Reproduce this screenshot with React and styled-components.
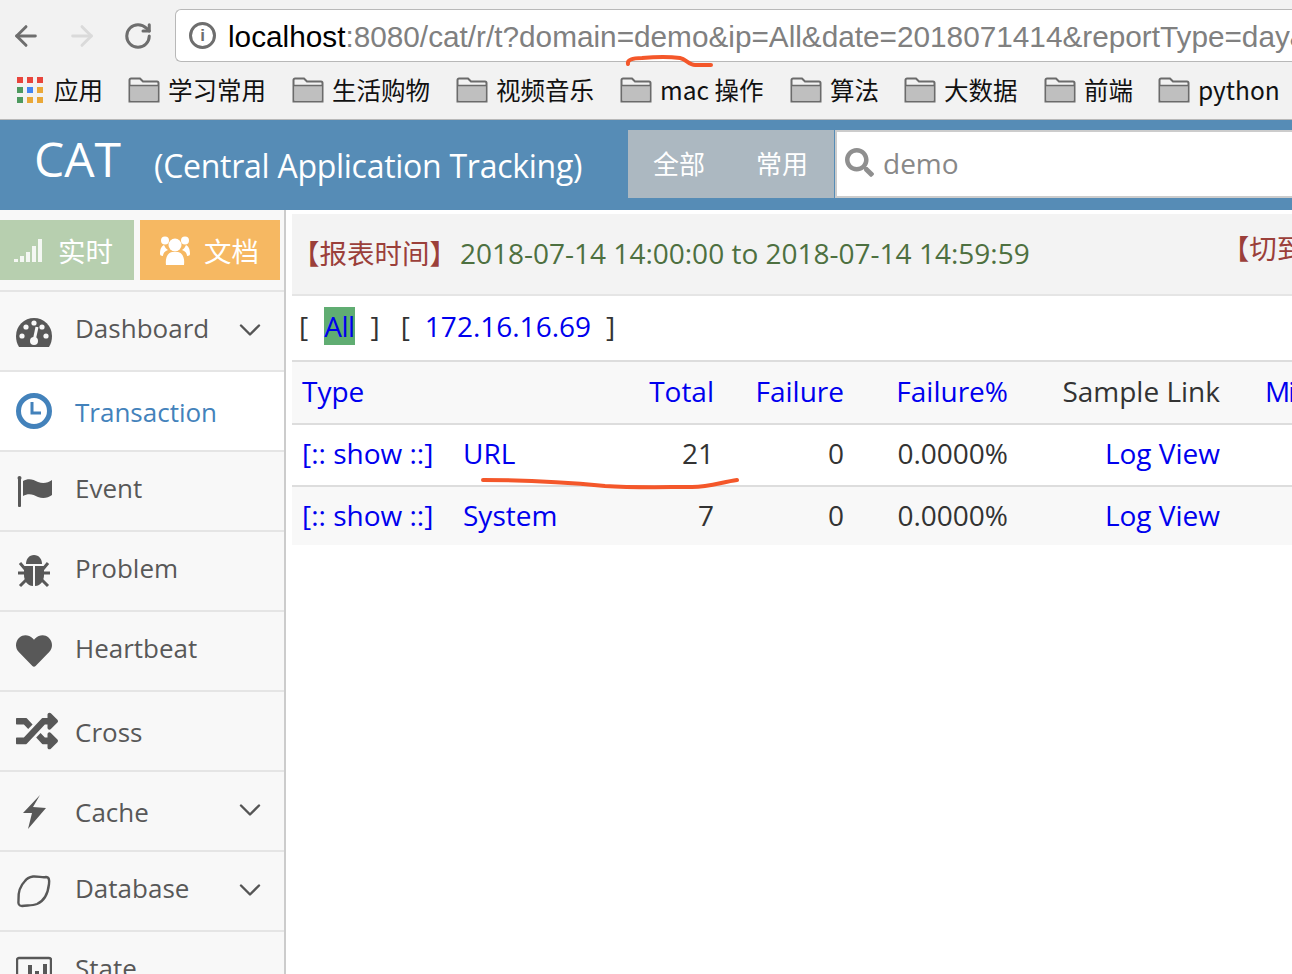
import styled, { createGlobalStyle } from 'styled-components';
import { ArrowLeft, ArrowRight, RotateCw, ChevronDown } from 'lucide-react';
import { FaHeart, FaRandom, FaSearch } from 'react-icons/fa';

function GaugeIcon() {
  return (
    <svg width="36" height="36" viewBox="0 0 36 36">
      <path fill="currentColor" d="M3 34C1 31 0 27 0 23a18 18 0 0 1 36 0c0 4-1 8-3 11z" />
      <g fill="#f8f8f8">
        <circle cx="6" cy="23" r="2.6" />
        <circle cx="10" cy="14" r="2.6" />
        <circle cx="18" cy="10" r="2.6" />
        <circle cx="26" cy="14" r="2.6" />
        <circle cx="30" cy="23" r="2.6" />
        <circle cx="18" cy="28" r="4" />
      </g>
      <path d="M18 28l3-14" stroke="#f8f8f8" strokeWidth="3" />
    </svg>
  );
}

function ClockIcon() {
  return (
    <svg width="36" height="36" viewBox="0 0 36 36" fill="none" stroke="currentColor">
      <circle cx="18" cy="18" r="15.5" strokeWidth="5" />
      <path d="M16 9v11h9" strokeWidth="3" />
    </svg>
  );
}

function FlagIcon() {
  return (
    <svg width="36" height="36" viewBox="0 0 36 36" fill="currentColor">
      <circle cx="3.5" cy="5" r="2" />
      <rect x="2" y="5" width="3" height="29" rx="1" />
      <path d="M7 8c5-3 10-2 15 1 5 2 10 1 14-2v15c-4 3-9 4-14 2-5-3-10-4-15-1z" />
    </svg>
  );
}

function BugIcon() {
  return (
    <svg width="36" height="36" viewBox="0 0 36 36" fill="currentColor">
      <path d="M10 11c0-5 3-9 8-9s8 4 8 9z" />
      <path d="M8 13h9v20c-6 0-9-6-9-11z" />
      <path d="M28 13h-9v20c6 0 9-6 9-11z" />
      <path d="M9 16l-5-6M27 16l5-6M2 20h7M27 20h7M10 27l-6 6M26 27l6 6" stroke="currentColor" strokeWidth="3" />
    </svg>
  );
}

function BoltIcon() {
  return (
    <svg width="36" height="36" viewBox="0 0 36 36" fill="currentColor">
      <path d="M24 2L7 20h9l-4 16 18-21-13-1z" />
    </svg>
  );
}

function LemonIcon() {
  return (
    <svg width="36" height="36" viewBox="0 0 36 36" fill="none" stroke="currentColor" strokeWidth="2.4">
      <path d="M17 3.500C22 3 27 5 30 4c3 0 3.500 3 3 7-1 9-5 17-12 20-5 2-11 1-15 2-3 0-4-2-3.500-6C2 19 5 12 9 8c2-3 5-4 8-4.500z" />
    </svg>
  );
}

function StateIcon() {
  return (
    <svg width="36" height="36" viewBox="0 0 36 36" fill="currentColor">
      <rect x="1" y="5" width="34" height="30" rx="2" fill="none" stroke="currentColor" strokeWidth="2.4" />
      <rect x="5" y="28" width="4" height="6" />
      <rect x="12" y="12" width="4" height="22" />
      <rect x="19" y="18" width="4" height="16" />
      <rect x="27" y="11" width="4" height="23" />
    </svg>
  );
}

function GroupIcon() {
  return (
    <svg width="30" height="30" viewBox="0 0 30 30" fill="#fff">
      <circle cx="15" cy="10" r="6.500" />
      <circle cx="5" cy="5.500" r="4" />
      <circle cx="25" cy="5.500" r="4" />
      <path d="M6 30c-1-8 2-12 6-13h6c4 1 7 5 6 13z" />
      <path d="M0 19c0-6 2-8 4-9 1 2 2 4 4 5-3 1-5 3-5 6-2 0-3-1-3-2z" />
      <path d="M30 19c0-6-2-8-4-9-1 2-2 4-4 5 3 1 5 3 5 6 2 0 3-1 3-2z" />
    </svg>
  );
}

function FolderIcon() {
  return (
    <svg width="32" height="26" viewBox="0 0 32 26">
      <path d="M1.500 24.500V3A1.500 1.500 0 0 1 3 1.500h9l3 3h14A1.500 1.500 0 0 1 30.500 6v18.500z" fill="#f2f2f2" stroke="#6b6b6b" strokeWidth="2" />
      <rect x="2.500" y="9" width="27" height="15" fill="#bfbfbf" />
      <path d="M2 8.500h28" stroke="#6b6b6b" strokeWidth="1.500" />
    </svg>
  );
}

function AppsIcon() {
  const colors = ['#e8453c', '#e8453c', '#e8453c', '#4e9a5f', '#4285f4', '#eaa838', '#4e9a5f', '#eaa838', '#eaa838'];
  return (
    <svg width="28" height="28" viewBox="0 0 28 28">
      {colors.map((color, i) => (
        <rect key={i} x={1 + (i % 3) * 10} y={1 + Math.floor(i / 3) * 10} width="6" height="6" fill={color} />
      ))}
    </svg>
  );
}

function SignalIcon() {
  return (
    <svg width="30" height="26" viewBox="0 0 30 26" fill="#fff" opacity="0.85">
      <rect x="0" y="22" width="4" height="3" />
      <rect x="6" y="19" width="4" height="6" />
      <rect x="12" y="15" width="4" height="10" />
      <rect x="18" y="9" width="4" height="16" />
      <rect x="24" y="2" width="4" height="23" />
    </svg>
  );
}

const bookmarks = [
  { name: '学习常用', width: 164 },
  { name: '生活购物', width: 164 },
  { name: '视频音乐', width: 164 },
  { name: 'mac 操作', width: 170 },
  { name: '算法', width: 114 },
  { name: '大数据', width: 140 },
  { name: '前端', width: 114 },
  { name: 'python', width: 130 },
];

const navItems = [
  { name: 'Dashboard', icon: GaugeIcon, more: true },
  { name: 'Transaction', icon: ClockIcon, active: true, low: true },
  { name: 'Event', icon: FlagIcon },
  { name: 'Problem', icon: BugIcon },
  { name: 'Heartbeat', icon: FaHeart },
  { name: 'Cross', icon: FaRandom, low: true, wide: true },
  { name: 'Cache', icon: BoltIcon, more: true, low: true },
  { name: 'Database', icon: LemonIcon, more: true },
  { name: 'State', icon: StateIcon },
];

const rows = [
  { type: 'URL', total: 21 },
  { type: 'System', total: 7 },
];

export default function App() {
  return (
    <Page>
      <GlobalStyle />

      <BrowserBar>
        <AddressRow>
          <NavArrow><ArrowLeft size={32} strokeWidth={2.2} /></NavArrow>
          <NavArrow $off><ArrowRight size={32} strokeWidth={2.2} /></NavArrow>
          <NavArrow><RotateCw size={30} strokeWidth={2.4} /></NavArrow>
          <Address>
            <InfoMark>i</InfoMark>
            <Host>localhost</Host>:8080/cat/r/t?domain=demo&amp;ip=All&amp;date=2018071414&amp;reportType=day&amp;op=view
          </Address>
        </AddressRow>
        <Bookmarks>
          <AppsBookmark><AppsIcon />应用</AppsBookmark>
          {bookmarks.map(item => (
            <Bookmark key={item.name} $width={item.width}><FolderIcon />{item.name}</Bookmark>
          ))}
        </Bookmarks>
      </BrowserBar>

      <Header>
        <Brand>CAT</Brand>
        <Subtitle>(Central Application Tracking)</Subtitle>
        <Tabs>
          <Tab>全部</Tab>
          <Tab>常用</Tab>
        </Tabs>
        <SearchBox>
          <FaSearch />
          <span>demo</span>
        </SearchBox>
      </Header>

      <Body>
        <Sidebar>
          <Shortcuts>
            <Shortcut $color="#b7cfaf" $width={134} $pad={14}><SignalIcon />实时</Shortcut>
            <Shortcut $color="#f6b862" $width={140} $pad={20}><GroupIcon />文档</Shortcut>
          </Shortcuts>
          {navItems.map(item => (
            <NavItem key={item.name} $active={item.active}>
              <NavIcon $wide={item.wide}><item.icon /></NavIcon>
              <NavLabel $low={item.low}>{item.name}</NavLabel>
              {item.more && <NavMore><ChevronDown size={36} strokeWidth={1.6} /></NavMore>}
            </NavItem>
          ))}
        </Sidebar>

        <Main>
          <ReportBar>
            <Red>【报表时间】</Red>
            <Green>2018-07-14 14:00:00 to 2018-07-14 14:59:59</Green>
            <SwitchLink>【切到历史模式】</SwitchLink>
          </ReportBar>

          <IpRow>
            <Bracket>[</Bracket>
            <IpLink $selected>All</IpLink>
            <Bracket>]</Bracket>
            <Bracket $open>[</Bracket>
            <IpLink>172.16.16.69</IpLink>
            <Bracket>]</Bracket>
          </IpRow>

          <TableHead>
            <HeadLink $span>Type</HeadLink>
            <HeadLink $right>Total</HeadLink>
            <HeadLink $right>Failure</HeadLink>
            <HeadLink $right>Failure%</HeadLink>
            <HeadText>Sample Link</HeadText>
            <HeadLink $min>Min</HeadLink>
          </TableHead>
          {rows.map((row, i) => (
            <TableRow key={row.type} $striped={i % 2 === 1}>
              <Cell><CellLink>[:: show ::]</CellLink></Cell>
              <Cell><CellLink>{row.type}</CellLink></Cell>
              <Cell $right>{row.total}</Cell>
              <Cell $right>0</Cell>
              <Cell $right>0.0000%</Cell>
              <Cell $right><CellLink>Log View</CellLink></Cell>
            </TableRow>
          ))}
        </Main>
      </Body>

      <Scribbles viewBox="0 0 1292 974" width="1292" height="974">
        <path d="M628 64c-1-4 4-6 14-6 12-1 30-1 38 0 6 1 9 7 15 7h16" />
        <path d="M483 480c40 0 80 2 122 6 30 2 60 1 87 1 18 0 30-5 45-7" />
      </Scribbles>
    </Page>
  );
}

const GlobalStyle = createGlobalStyle`
  html, body {
    margin: 0;
    padding: 0;
    background: #fff;
  }
`;

const Page = styled.div`
  position: relative;
  width: 1292px;
  height: 974px;
  overflow: hidden;
  font-family: "Open Sans", "Noto Sans CJK SC", sans-serif;
  color: #333;
`;

const BrowserBar = styled.div`
  height: 119px;
  background: #f2f2f2;
  border-bottom: 1px solid #b9b9b9;
  overflow: hidden;
`;

const AddressRow = styled.div`
  display: flex;
  align-items: center;
  gap: 24px;
  height: 53px;
  padding: 9px 0 0 10px;
`;

const NavArrow = styled.div`
  flex: none;
  display: flex;
  justify-content: center;
  width: 32px;
  color: ${props => (props.$off ? '#dadada' : '#6e6e6e')};
`;

const Address = styled.div`
  flex: none;
  display: flex;
  align-items: center;
  width: 1200px;
  height: 53px;
  box-sizing: border-box;
  margin-left: -3px;
  padding: 2px 0 0 13px;
  background: #fff;
  border: 1px solid #b8b8b8;
  border-right: 0;
  border-radius: 6px 0 0 6px;
  font-family: "Liberation Sans", sans-serif;
  font-size: 29.75px;
  color: #808080;
  white-space: nowrap;
`;

const InfoMark = styled.span`
  flex: none;
  display: flex;
  align-items: center;
  justify-content: center;
  width: 21px;
  height: 21px;
  margin: -2px 12px 0 0;
  border: 3px solid #6e6e6e;
  border-radius: 50%;
  font-size: 17px;
  font-weight: bold;
  color: #6e6e6e;
`;

const Host = styled.span`
  color: #000;
`;

const Bookmarks = styled.div`
  display: flex;
  align-items: center;
  height: 55px;
  padding-left: 16px;
  font-family: "Noto Sans CJK SC", sans-serif;
  font-size: 24.500px;
  color: #111;
  white-space: nowrap;
`;

const AppsBookmark = styled.div`
  flex: none;
  display: flex;
  align-items: center;
  gap: 10px;
  width: 112px;
`;

const Bookmark = styled.div`
  flex: none;
  display: flex;
  align-items: center;
  gap: 8px;
  width: ${props => props.$width}px;
`;

const Header = styled.div`
  display: flex;
  align-items: center;
  height: 90px;
  padding-left: 34px;
  background: #568cb6;
  color: #fff;
  white-space: nowrap;
`;

const Brand = styled.div`
  flex: none;
  width: 120px;
  font-size: 48px;
  line-height: 80px;
  padding-bottom: 12px;
`;

const Subtitle = styled.div`
  flex: none;
  width: 474px;
  font-size: 32px;
  letter-spacing: -0.27px;
`;

const Tabs = styled.div`
  flex: none;
  display: flex;
  align-items: center;
  gap: 51px;
  width: 206px;
  height: 68px;
  box-sizing: border-box;
  margin-bottom: 2px;
  padding: 0 0 4px 25px;
  background: #acb8c1;
`;

const Tab = styled.div`
  flex: none;
  width: 52px;
  font-family: "Noto Sans CJK SC", sans-serif;
  font-size: 26px;
`;

const SearchBox = styled.div`
  flex: none;
  display: flex;
  align-items: center;
  gap: 9px;
  width: 500px;
  height: 68px;
  box-sizing: border-box;
  margin: 0 0 2px 1px;
  padding: 0 0 2px 8px;
  background: #fff;
  border: 2px solid #ccc;
  border-right: 0;
  font-size: 28px;
  color: #888;

  svg {
    font-size: 29px;
    color: #8f8f8f;
    margin-bottom: 2px;
  }
`;

const Body = styled.div`
  display: flex;
  height: 764px;
`;

const Sidebar = styled.div`
  flex: none;
  width: 284px;
  background: #f8f8f8;
  border-right: 2px solid #ccc;
  overflow: hidden;
`;

const Shortcuts = styled.div`
  display: flex;
  gap: 6px;
  height: 82px;
  padding-top: 10px;
  box-sizing: border-box;
  border-bottom: 2px solid #e5e5e5;
`;

const Shortcut = styled.div`
  flex: none;
  display: flex;
  align-items: center;
  gap: 14px;
  width: ${props => props.$width}px;
  height: 60px;
  box-sizing: border-box;
  padding-left: ${props => props.$pad}px;
  background: ${props => props.$color};
  color: #fff;
  font-family: "Noto Sans CJK SC", sans-serif;
  font-size: 27.500px;
`;

const NavItem = styled.div`
  position: relative;
  display: flex;
  align-items: center;
  height: 78px;
  border-bottom: 2px solid #e5e5e5;
  background: ${props => (props.$active ? '#fff' : 'transparent')};
  color: ${props => (props.$active ? '#4382bb' : '#585858')};

  ${props => props.$active && `
    &::after {
      content: '';
      position: absolute;
      top: -2px;
      right: -4px;
      width: 4px;
      height: 80px;
      background: #4382bb;
    }
  `}
`;

const NavIcon = styled.div`
  flex: none;
  display: flex;
  justify-content: center;
  width: 68px;
  font-size: ${props => (props.$wide ? 42 : 36)}px;
  line-height: 0;

  svg {
    margin-left: ${props => (props.$wide ? 6 : 0)}px;
  }
`;

const NavLabel = styled.div`
  flex: 1;
  padding-left: 7px;
  padding-top: ${props => (props.$low ? 2 : 0)}px;
  padding-bottom: ${props => (props.$low ? 0 : 6)}px;
  font-size: 26px;
`;

const NavMore = styled.div`
  flex: none;
  width: 52px;
  margin-bottom: 3px;
  line-height: 0;
  color: #555;
`;

const Main = styled.div`
  flex: 1;
  min-width: 0;
  padding: 4px 0 0 6px;
  overflow: hidden;
`;

const ReportBar = styled.div`
  display: flex;
  align-items: center;
  height: 82px;
  box-sizing: border-box;
  padding-bottom: 2px;
  background: #f3f3f3;
  border-bottom: 2px solid #e5e5e5;
  font-size: 28px;
  white-space: nowrap;
`;

const Red = styled.span`
  padding-bottom: 2px;
  color: #9b3f3a;
  font-family: "Noto Sans CJK SC", sans-serif;
  font-size: 27.500px;
`;

const Green = styled.span`
  margin-left: 3px;
  color: #4d7040;
`;

const SwitchLink = styled(Red)`
  margin-left: 192px;
  padding-bottom: 12px;
`;

const IpRow = styled.div`
  display: flex;
  align-items: center;
  height: 60px;
  padding: 0 0 4px 7px;
  font-size: 28px;
`;

const Bracket = styled.span`
  margin-left: ${props => (props.$open ? 21 : 0)}px;
`;

const IpLink = styled.span`
  margin: 0 ${props => (props.$selected ? 16 : 15)}px 0 ${props => (props.$selected ? 16 : 15)}px;
  line-height: 38px;
  letter-spacing: ${props => (props.$selected ? -0.5 : 0)}px;
  color: #0000ee;
  background: ${props => (props.$selected ? '#60ad72' : 'transparent')};
`;

const columns = '171px 185px 66px 130px 164px 212px 200px';

const TableHead = styled.div`
  display: grid;
  grid-template-columns: ${columns};
  align-items: center;
  width: 1128px;
  height: 57px;
  padding-bottom: 4px;
  background: #f8f8f8;
  border-top: 2px solid #ddd;
  border-bottom: 2px solid #ddd;
  font-size: 28px;
  white-space: nowrap;
`;

const HeadLink = styled.div`
  grid-column: ${props => (props.$span ? 'span 2' : 'auto')};
  padding-left: ${props => (props.$span ? 10 : props.$min ? 45 : 0)}px;
  text-align: ${props => (props.$right ? 'right' : 'left')};
  letter-spacing: ${props => (props.$min ? -2 : 0)}px;
  color: #0000ee;
`;

const HeadText = styled.div`
  text-align: right;
`;

const TableRow = styled.div`
  display: grid;
  grid-template-columns: ${columns};
  align-items: center;
  width: 1128px;
  height: 56px;
  padding-bottom: ${props => (props.$striped ? 2 : 4)}px;
  background: ${props => (props.$striped ? '#f8f8f8' : '#fff')};
  border-bottom: ${props => (props.$striped ? 0 : 2)}px solid #ddd;
  font-size: 28px;
  white-space: nowrap;
`;

const Cell = styled.div`
  text-align: ${props => (props.$right ? 'right' : 'left')};
  padding-left: ${props => (props.$right ? 0 : 10)}px;

  &:nth-child(2) {
    padding-left: 0;
  }
`;

const CellLink = styled.span`
  color: #0000ee;
`;

const Scribbles = styled.svg`
  position: absolute;
  top: 0;
  left: 0;
  pointer-events: none;
  fill: none;
  stroke: #f4572a;
  stroke-width: 4;
  stroke-linecap: round;
`;
